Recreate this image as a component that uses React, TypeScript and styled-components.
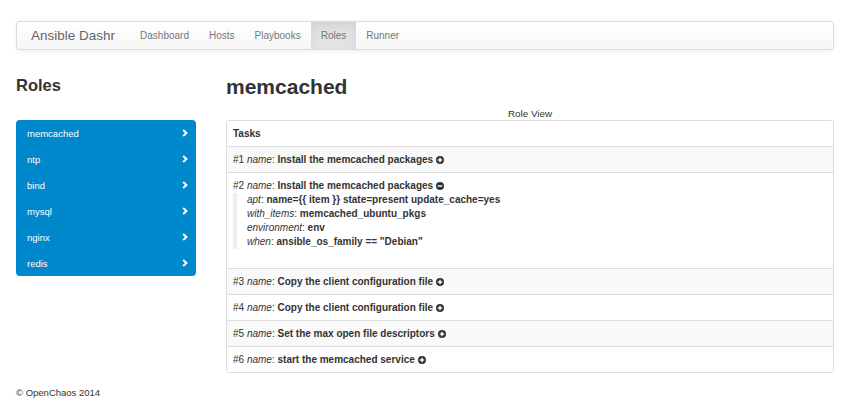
import React from "react";
import styled, { createGlobalStyle } from "styled-components";

const Global = createGlobalStyle`
  html, body { margin: 0; padding: 0; background: #fff; }
  body {
    font-family: "Liberation Sans", Arial, Helvetica, sans-serif;
    color: #333;
    font-size: 10px;
  }
  * { box-sizing: border-box; }
`;

const Page = styled.div`
  padding: 21px 11px 0 16px;
`;

const Navbar = styled.nav`
  height: 29px;
  display: flex;
  align-items: stretch;
  border: 1px solid #dcdcdc;
  border-radius: 3px;
  background: linear-gradient(to bottom, #ffffff 0%, #f6f6f6 100%);
  box-shadow: 0 1px 4px rgba(0, 0, 0, 0.08);
  overflow: hidden;
`;

const Brand = styled.a`
  display: flex;
  align-items: center;
  padding: 0 15px 0 14px;
  font-size: 13.5px;
  color: #666;
  text-decoration: none;
`;

const NavItem = styled.a<{ $active?: boolean }>`
  display: flex;
  align-items: center;
  padding: 0 10px;
  font-size: 10px;
  color: #777;
  text-decoration: none;
  background: ${(p) => (p.$active ? "linear-gradient(to bottom, #dedede 0%, #e4e4e4 100%)" : "transparent")};
  box-shadow: ${(p) => (p.$active ? "inset 0 3px 8px rgba(0,0,0,0.06)" : "none")};
`;

const Body = styled.div`
  display: flex;
  gap: 30px;
  align-items: flex-start;
`;

const Side = styled.aside`
  width: 180px;
  flex: none;
`;

const SideTitle = styled.h3`
  margin: 26px 0 26px;
  font-size: 16.5px;
  line-height: 18px;
  font-weight: bold;
  color: #333;
`;

const RoleList = styled.ul`
  list-style: none;
  margin: 0;
  padding: 0;
  background: #0088cc;
  border-radius: 4px;
  overflow: hidden;
`;

const RoleItem = styled.li`
  height: 26px;
  display: flex;
  align-items: center;
  justify-content: space-between;
  padding: 0 8px 0 11px;
  font-size: 9.5px;
  color: #fff;
`;

const Main = styled.main`
  flex: 1;
  min-width: 0;
`;

const Title = styled.h1`
  margin: 24.5px 0 9.5px;
  font-size: 21px;
  line-height: 23px;
  font-weight: bold;
  color: #333;
`;

const Caption = styled.div`
  text-align: center;
  font-size: 9.8px;
  line-height: 13px;
  color: #333;
`;

const Panel = styled.div`
  border: 1px solid #dddddd;
  border-radius: 3px;
  overflow: hidden;
`;

const Row = styled.div<{ $striped?: boolean; $header?: boolean }>`
  padding: 6px 6px;
  line-height: 13px;
  height: ${(p) => (p.$header ? "25px" : "auto")};
  font-size: 10px;
  border-top: ${(p) => (p.$header ? "none" : "1px solid #dddddd")};
  background: ${(p) => (p.$striped ? "#f9f9f9" : "#fff")};
  font-weight: ${(p) => (p.$header ? "bold" : "normal")};
`;

const Key = styled.em`
  font-style: italic;
`;

const Val = styled.b`
  font-weight: bold;
`;

const Quote = styled.div`
  margin: 1px 0 13px;
  padding: 0 0 0 10px;
  border-left: 4px solid #eeeeee;
`;

const QLine = styled.div`
  line-height: 14px;
`;

const SignSvg = styled.svg`
  display: inline;
  vertical-align: -0.5px;
  margin-left: 3px;
`;

const Footer = styled.footer`
  margin-top: 13px;
  font-size: 9.5px;
  line-height: 13px;
  color: #333;
`;

const Chevron = () => (
  <svg width="6" height="8" viewBox="0 0 6 8">
    <polyline points="1.2,1 4.4,4 1.2,7" fill="none" stroke="#fff" strokeWidth="2" />
  </svg>
);

const Sign = ({ minus }: { minus?: boolean }) => (
  <SignSvg width="8" height="8" viewBox="0 0 8 8">
    <circle cx="4" cy="4" r="4" fill="#333" />
    <rect x="1.8" y="3.3" width="4.4" height="1.4" fill="#fff" />
    {!minus && <rect x="3.3" y="1.8" width="1.4" height="4.4" fill="#fff" />}
  </SignSvg>
);

const roles = ["memcached", "ntp", "bind", "mysql", "nginx", "redis"];

const tasks = [
  "Install the memcached packages",
  "Install the memcached packages",
  "Copy the client configuration file",
  "Copy the client configuration file",
  "Set the max open file descriptors",
  "start the memcached service",
];

const details: [string, string][] = [
  ["apt", "name={{ item }} state=present update_cache=yes"],
  ["with_items", "memcached_ubuntu_pkgs"],
  ["environment", "env"],
  ["when", 'ansible_os_family == "Debian"'],
];

export default function App() {
  return (
    <Page>
      <Global />
      <Navbar>
        <Brand>Ansible Dashr</Brand>
        <NavItem>Dashboard</NavItem>
        <NavItem>Hosts</NavItem>
        <NavItem>Playbooks</NavItem>
        <NavItem $active>Roles</NavItem>
        <NavItem>Runner</NavItem>
      </Navbar>
      <Body>
        <Side>
          <SideTitle>Roles</SideTitle>
          <RoleList>
            {roles.map((r) => (
              <RoleItem key={r}>
                <span>{r}</span>
                <Chevron />
              </RoleItem>
            ))}
          </RoleList>
        </Side>
        <Main>
          <Title>memcached</Title>
          <Caption>Role View</Caption>
          <Panel>
            <Row $header>Tasks</Row>
            {tasks.map((t, i) => (
              <Row key={i} $striped={i % 2 === 0}>
                #{i + 1} <Key>name</Key>: <Val>{t}</Val>
                <Sign minus={i === 1} />
                {i === 1 && (
                  <Quote>
                    {details.map(([k, v]) => (
                      <QLine key={k}>
                        <Key>{k}</Key>: <Val>{v}</Val>
                      </QLine>
                    ))}
                  </Quote>
                )}
              </Row>
            ))}
          </Panel>
        </Main>
      </Body>
      <Footer>© OpenChaos 2014</Footer>
    </Page>
  );
}
